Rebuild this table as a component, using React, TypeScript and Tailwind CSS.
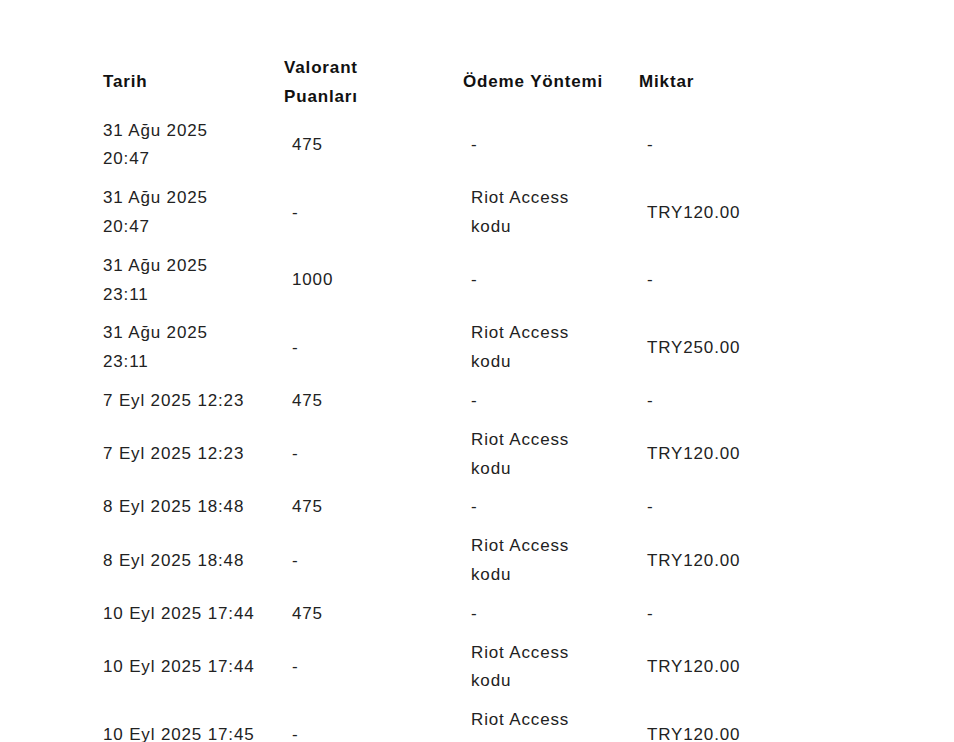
const ROWS = [
  { date: '31 Ağu 2025 20:47', points: '475', method: '-', amount: '-' },
  { date: '31 Ağu 2025 20:47', points: '-', method: 'Riot Access kodu', amount: 'TRY120.00' },
  { date: '31 Ağu 2025 23:11', points: '1000', method: '-', amount: '-' },
  { date: '31 Ağu 2025 23:11', points: '-', method: 'Riot Access kodu', amount: 'TRY250.00' },
  { date: '7 Eyl 2025 12:23', points: '475', method: '-', amount: '-' },
  { date: '7 Eyl 2025 12:23', points: '-', method: 'Riot Access kodu', amount: 'TRY120.00' },
  { date: '8 Eyl 2025 18:48', points: '475', method: '-', amount: '-' },
  { date: '8 Eyl 2025 18:48', points: '-', method: 'Riot Access kodu', amount: 'TRY120.00' },
  { date: '10 Eyl 2025 17:44', points: '475', method: '-', amount: '-' },
  { date: '10 Eyl 2025 17:44', points: '-', method: 'Riot Access kodu', amount: 'TRY120.00' },
  { date: '10 Eyl 2025 17:45', points: '-', method: 'Riot Access kodu', amount: 'TRY120.00' },
  { date: '10 Eyl 2025 17:45', points: '475', method: '-', amount: '-' },
]

export default function App() {
  return (
    <div className="min-h-screen bg-white pl-[103px] pt-[54px] font-['Liberation_Sans',Arial,sans-serif] text-[17px] leading-[28.8px] tracking-[0.05em] text-[#222]">
      <table className="table-fixed border-collapse text-left">
        <colgroup>
          <col className="w-[181px]" />
          <col className="w-[179px]" />
          <col className="w-[176px]" />
          <col className="w-[180px]" />
        </colgroup>
        <thead>
          <tr className="font-bold text-[#111]">
            <th className="py-0 pr-[27px]">Tarih</th>
            <th className="py-0 pr-[32px]">Valorant Puanları</th>
            <th className="py-0 pr-[28px]">Ödeme Yöntemi</th>
            <th className="py-0 pr-[20px]">Miktar</th>
          </tr>
        </thead>
        <tbody>
          {ROWS.map((r, i) => (
            <tr key={i}>
              <td className="py-[5px] pr-[27px]">{r.date}</td>
              <td className="py-[5px] pl-2 pr-[32px]">{r.points}</td>
              <td className="py-[5px] pl-2 pr-[28px]">{r.method}</td>
              <td className="py-[5px] pl-2 pr-[20px]">{r.amount}</td>
            </tr>
          ))}
        </tbody>
      </table>
    </div>
  )
}
